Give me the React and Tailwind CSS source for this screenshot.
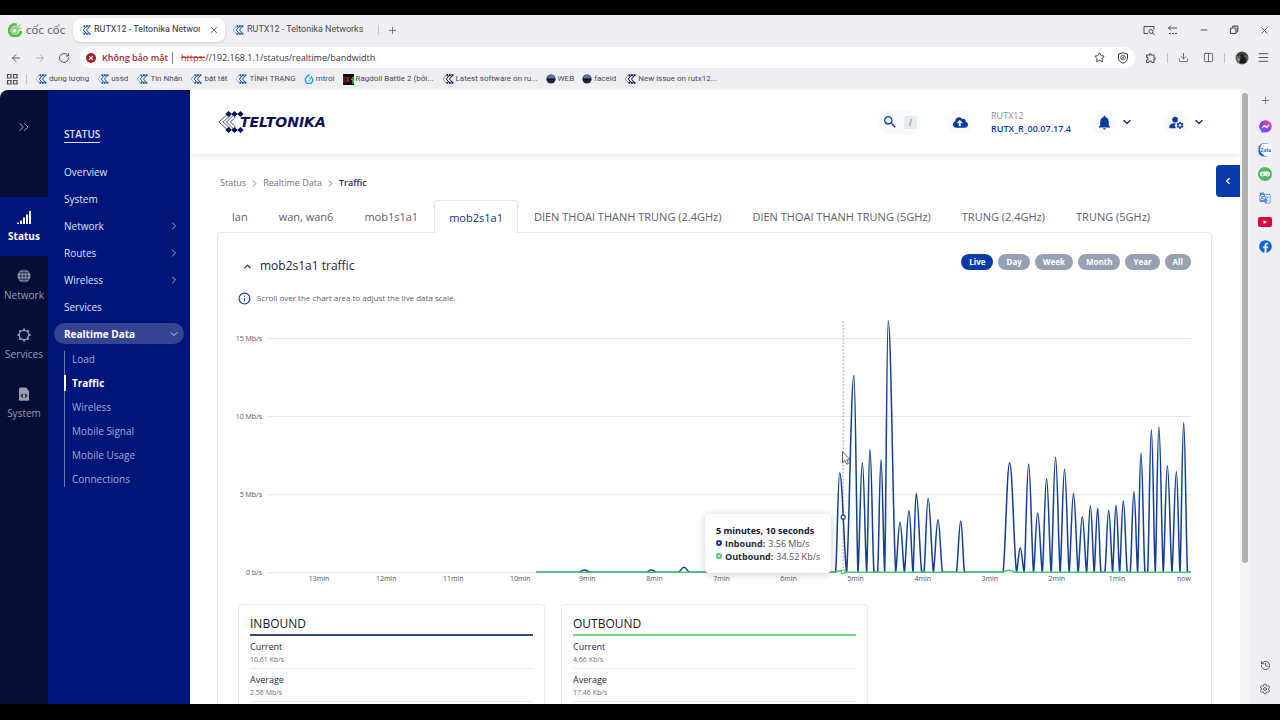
import { useState } from 'react'
import {
  ArrowLeft, ArrowRight, RotateCw, X, Plus, Star, Download, Columns2, Menu, Minus,
  ChevronRight, ChevronLeft, ChevronDown, ChevronUp, ChevronsRight, History, Settings, Info,
} from 'lucide-react'
import { FaFacebook, FaFacebookMessenger, FaCloudUploadAlt, FaGamepad } from 'react-icons/fa'
import { MdSearch, MdNotifications, MdManageAccounts, MdGTranslate, MdOutlineExtension } from 'react-icons/md'

const BOOKMARKS = [
  { label: 'dung lượng', icon: 'teltonika' },
  { label: 'ussd', icon: 'teltonika' },
  { label: 'Tin Nhắn', icon: 'teltonika' },
  { label: 'bật tắt', icon: 'teltonika' },
  { label: 'TÌNH TRẠNG', icon: 'teltonika' },
  { label: 'mtroi', icon: 'drop' },
  { label: 'Ragdoll Battle 2 (bởi...', icon: 'game' },
  { label: 'Latest software on ru...', icon: 'dark' },
  { label: 'WEB', icon: 'orb' },
  { label: 'faceid', icon: 'orb' },
  { label: 'New issue on rutx12...', icon: 'dark' },
]

const RAIL = ['Status', 'Network', 'Services', 'System']

const MENU = [
  { label: 'Overview' },
  { label: 'System' },
  { label: 'Network', nested: true },
  { label: 'Routes', nested: true },
  { label: 'Wireless', nested: true },
  { label: 'Services' },
]

const SUBMENU = ['Load', 'Traffic', 'Wireless', 'Mobile Signal', 'Mobile Usage', 'Connections']

const TABS = [
  'lan', 'wan, wan6', 'mob1s1a1', 'mob2s1a1',
  'DIEN THOAI THANH TRUNG (2.4GHz)', 'DIEN THOAI THANH TRUNG (5GHz)',
  'TRUNG (2.4GHz)', 'TRUNG (5GHz)',
]

const RANGES = ['Live', 'Day', 'Week', 'Month', 'Year', 'All']

const STATS = [
  { title: 'INBOUND', line: 'border-[#2c4a78]', rows: [['Current', '10.61 Kb/s'], ['Average', '2.56 Mb/s']] },
  { title: 'OUTBOUND', line: 'border-[#74d188]', rows: [['Current', '4.66 Kb/s'], ['Average', '17.46 Kb/s']] },
]

// chart geometry
const BASE = 257
const PX_PER_MB = 15.6

// [start, centre, end, Mb/s]
const PEAKS = [
  [597, 601, 608, 6.35], [608, 615.3, 619.3, 12.6], [619.3, 623.7, 628, 7.02], [628, 631.3, 635.3, 7.9],
  [639, 642.3, 646, 7.2], [646, 649.5, 657, 16.1], [657, 661.3, 665.7, 3.2], [665.7, 670.3, 674.3, 3.95],
  [674.3, 677.5, 683, 5.05], [685.3, 689.4, 694.7, 4.72], [694.7, 699.3, 703.7, 3.37], [717.7, 722, 725.7, 3.28],
  [764.3, 770.8, 777.7, 7.02], [777.7, 781.4, 785.3, 1.55], [785.3, 789.8, 794.7, 6.93], [794.7, 798.8, 803.5, 3.8],
  [803.5, 807.7, 812.3, 6], [812.3, 816.7, 821.3, 7.36], [821.3, 825.7, 830.3, 6.6], [830.3, 834.6, 839.3, 5.05],
  [839.3, 843.4, 847.7, 3.56], [847.7, 851.5, 855.3, 4.25], [855.3, 858.8, 862, 4.1], [866, 869.8, 873.7, 3.97],
  [873.7, 877.1, 880.7, 4.27], [880.7, 884.4, 888.3, 4.58], [891.3, 895, 898.7, 5.16], [898.7, 902, 906, 7.64],
  [908.7, 912.4, 916.3, 9.13], [916.3, 919.9, 924.3, 9.3], [924.3, 928.4, 933, 6.82], [933, 937.4, 941, 6.43],
  [941, 944.7, 948.5, 9.58],
]

const SMALL_PEAKS = [[341, 346, 352, 0.14], [408, 413, 418, 0.14], [440, 445.5, 451, 0.32]]

const X_TICKS = [
  [81, '13min'], [148, '12min'], [215, '11min'], [282, '10min'], [349, '9min'], [416, '8min'], [483, '7min'],
  [550, '6min'], [617, '5min'], [684, '4min'], [751, '3min'], [818, '2min'], [878, '1min'], [945, 'now'],
]

const Y_TICKS = [[0, '0 b/s'], [5, '5 Mb/s'], [10, '10 Mb/s'], [15, '15 Mb/s']]

function buildPath(peaks, from) {
  let d = `M${from} ${BASE}`
  peaks.forEach(([s, c, e, v]) => {
    const h = v * PX_PER_MB
    const top = BASE - h
    d += ` L${s} ${BASE} C${s + (c - s) * 0.35} ${BASE - h * 0.15} ${c - (c - s) * 0.4} ${top} ${c} ${top}`
    d += ` C${c + (e - c) * 0.4} ${top} ${e - (e - c) * 0.35} ${BASE - h * 0.15} ${e} ${BASE}`
  })
  return `${d} L952 ${BASE}`
}

function Mark({ dark }) {
  const c = dark ? '#11164f' : '#1d5a9c'
  return (
    <svg viewBox="0 0 12 10" className="h-2.5 w-3 shrink-0" fill="none" stroke={c}>
      <path d="M4.500 .8 1 5l3.500 4.200" strokeWidth=".7" opacity=".6" />
      <path d="M6.800 2 4.300 5l2.500 3M10 2 7.500 5 10 8" strokeWidth="1" />
      <path d="M4.500 1.300h7M4.500 8.700h7" strokeWidth="1.900" strokeDasharray="1.900 .6" />
    </svg>
  )
}

function BookmarkIcon({ type }) {
  if (type === 'drop') {
    return (
      <svg viewBox="0 0 12 12" className="size-2.5 shrink-0" fill="none">
        <path d="M6.500.8C4 2.500 1.500 4.500 1.500 7.200a4.500 4.500 0 0 0 9 0C10.500 5 9 4.500 8.500 3" stroke="#1f9fd0" strokeWidth="1.700" />
        <path d="M6 4.500c2.500 1 2 4-.5 4.500" stroke="#4cc3ea" strokeWidth="1.500" />
      </svg>
    )
  }
  if (type === 'game') {
    return (
      <svg viewBox="0 0 12 12" className="size-[11px] shrink-0">
        <rect width="12" height="12" fill="#150808" />
        <path d="M1 3v6M3 3l4 6M7 3 3 9" stroke="#c22222" strokeWidth="1.200" />
        <path d="M11 3v2M9 5.500l2 1v4" stroke="#35b43a" strokeWidth="2" fill="none" />
      </svg>
    )
  }
  if (type === 'orb') {
    return (
      <svg viewBox="0 0 12 12" className="size-2.5 shrink-0">
        <circle cx="6" cy="6" r="5.500" fill="#1b2440" />
        <path d="M1.500 5.500a4.500 4.500 0 0 1 9 0Z" fill="#5c7396" />
        <path d="M1 6.500h10" stroke="#0c1226" strokeWidth="1.500" />
      </svg>
    )
  }
  return <Mark dark={type === 'dark'} />
}

function RailIcon({ name }) {
  if (name === 'Status') {
    return (
      <svg viewBox="0 0 14 14" className="size-3.5" fill="currentColor">
        <path d="M0 12.500h2V14H0zM3 10.500h2V14H3zM6 7.500h2V14H6zM9 4.500h2V14H9zM12 1h2v13h-2z" />
      </svg>
    )
  }
  if (name === 'Network') {
    return (
      <svg viewBox="0 0 14 14" className="size-3.5">
        <circle cx="7" cy="7" r="6.500" fill="currentColor" />
        <g fill="none" stroke="#040e37" strokeWidth=".7">
          <ellipse cx="7" cy="7" rx="3.200" ry="6.500" />
          <path d="M7 .5v13M.5 7h13M1.500 3.800h11M1.500 10.200h11" />
        </g>
      </svg>
    )
  }
  if (name === 'Services') {
    return (
      <svg viewBox="0 0 14 14" className="size-3.5" fill="none" stroke="currentColor">
        <circle cx="7" cy="7" r="4.700" strokeWidth="1.200" />
        <path d="M7 .5v2M7 11.500v2M.5 7h2M11.500 7h2M2.400 2.400l1.400 1.400M10.200 10.200l1.400 1.400M2.400 11.600l1.400-1.400M10.200 3.800l1.400-1.400" strokeWidth="2" />
      </svg>
    )
  }
  return (
    <svg viewBox="0 0 14 14" className="size-3.5">
      <path d="M3.500.5H9L12 4v8.500a1.200 1.200 0 0 1-1.200 1.200H3.200A1.200 1.200 0 0 1 2 12.500V2A1.500 1.500 0 0 1 3.500.5Z" fill="currentColor" />
      <path d="M6 7 4.200 8.800 6 10.600M8 7l1.800 1.800L8 10.600" fill="none" stroke="#040e37" strokeWidth="1.100" />
    </svg>
  )
}

function BrowserChrome() {
  return (
    <header className="shrink-0 text-[#4a4a50]">
      {/* Tab strip */}
      <div className="flex h-8 items-center pb-0.5 pl-2 font-['Roboto','Noto_Sans',sans-serif]">
        <div className="flex w-[65px] items-center gap-1">
          <svg viewBox="0 0 14 14" className="size-3.5 shrink-0">
            <path d="M8 1.500a6 6 0 1 0 5 6.500" fill="none" stroke="#55b948" strokeWidth="2.600" />
            <circle cx="6.500" cy="8" r="4" fill="#8fd480" />
            <circle cx="6.500" cy="7.800" r="1.800" fill="#efeff3" />
            <path d="M8 4.500 8.500.5M9.500 5 12 1.500M10 6.500l3.500-1.500" stroke="#6cc15c" strokeWidth="1.200" />
          </svg>
          <span className="font-['Lato',sans-serif] text-xs leading-4 whitespace-nowrap text-[#66666c]">cốc cốc</span>
        </div>
        <div className="flex h-6 w-[152px] items-center gap-[3px] rounded-lg bg-white px-1.5 shadow-sm">
          <Mark />
          <button className="w-[106px] overflow-hidden text-left whitespace-nowrap text-[#333338]">RUTX12 - Teltonika Networks</button>
          <button aria-label="Close tab" className="ml-auto"><X size={10} strokeWidth={2} /></button>
        </div>
        <button className="ml-[7px] flex w-[146px] items-center gap-[3px] whitespace-nowrap">
          <Mark />
          RUTX12 - Teltonika Networks
        </button>
        <span className="h-2.5 w-px bg-[#c3c3c8]" />
        <button aria-label="New tab" className="ml-2"><Plus size={11} strokeWidth={1.500} /></button>
        <div className="ml-auto flex items-center pr-2.5">
          <button aria-label="Search tabs" className="mr-3">
            <svg viewBox="0 0 12 12" className="size-3" fill="none" stroke="currentColor">
              <path d="M5 9.500H1v-7h10v3" />
              <circle cx="8" cy="7.500" r="2" />
              <path d="m9.500 9 2 2" />
            </svg>
          </button>
          <button aria-label="Reopen tab" className="mr-5">
            <svg viewBox="0 0 12 12" className="size-3" fill="none" stroke="currentColor">
              <path d="M4 1.500 1.500 4 4 6.500M1.500 4H10" />
              <path d="M2 9.500h9" strokeDasharray="2 1" />
            </svg>
          </button>
          <button aria-label="Minimize" className="mr-5"><Minus size={10} strokeWidth={2.500} /></button>
          <button aria-label="Restore" className="mr-5">
            <svg viewBox="0 0 10 10" className="size-2.5" fill="none" stroke="currentColor" strokeWidth="1.200">
              <rect x="1.500" y="3" width="5.500" height="5.500" rx="1" />
              <path d="M3.500 2.500V2a.8.8 0 0 1 .8-.8H8a.8.8 0 0 1 .8.800v4a.8.8 0 0 1-.8.800H7.500" />
            </svg>
          </button>
          <button aria-label="Close"><X size={11} strokeWidth={2} /></button>
        </div>
      </div>

      {/* Address bar */}
      <div className="flex h-[21px] items-center pr-2.5 pl-2.5">
        <button aria-label="Back" className="mr-3"><ArrowLeft size={12} strokeWidth={1.800} /></button>
        <button aria-label="Forward" className="mr-3 text-[#a4a4aa]"><ArrowRight size={12} strokeWidth={1.800} /></button>
        <button aria-label="Reload" className="mr-2.5"><RotateCw size={12} strokeWidth={1.800} /></button>
        <div className="flex h-full flex-1 items-center rounded-full bg-white px-1.5 text-[#333338]">
          <svg viewBox="0 0 10 10" className="size-2.5 shrink-0">
            <circle cx="5" cy="5" r="5" fill="#a81e26" />
            <path d="m3.200 3.200 3.600 3.600M6.800 3.200 3.200 6.800" stroke="#fff" strokeWidth="1.200" />
          </svg>
          <span className="ml-1.5 font-semibold whitespace-nowrap text-[#a81e26]">Không bảo mật</span>
          <span className="mr-2 ml-1 h-3 w-px bg-[#85858a]" />
          <span className="text-[#c0392f] line-through">https:</span>
          <input aria-label="Address" defaultValue="//192.168.1.1/status/realtime/bandwidth" className="min-w-0 flex-1 bg-transparent outline-none" />
          <button aria-label="Bookmark" className="mr-3"><Star size={11} strokeWidth={2} /></button>
          <button aria-label="Ad block">
            <svg viewBox="0 0 12 12" className="size-3" fill="none" stroke="currentColor">
              <path d="M6 .8 10.500 2v4c0 2.500-1.800 4.200-4.500 5.200C3.300 10.200 1.500 8.500 1.500 6V2Z" />
              <circle cx="6" cy="5.500" r="2.400" strokeWidth=".7" />
              <path d="M4.500 7 7.500 4M5 4.500l1.500 2" strokeWidth=".8" />
            </svg>
          </button>
        </div>
        <button aria-label="Extensions" className="ml-2.5"><MdOutlineExtension size={12} /></button>
        <span className="mx-2.5 h-2.5 w-px bg-[#c3c3c8]" />
        <button aria-label="Downloads"><Download size={11} strokeWidth={1.800} /></button>
        <button aria-label="Split view" className="ml-3.5"><Columns2 size={11} strokeWidth={1.800} /></button>
        <span className="mx-2.5 h-2.5 w-px bg-[#c3c3c8]" />
        <button aria-label="Profile">
          <svg viewBox="0 0 14 14" className="size-3.5">
            <circle cx="7" cy="7" r="6.500" fill="#5e6350" />
            <path d="M1 5a6.500 6.500 0 0 1 12 0L9 4 6 5Z" fill="#3d4238" />
            <path d="M5 4l3-1 1.500 3 2 2-1 4-5 .500L4 10l2-3Z" fill="#1d1c24" />
            <path d="M2 7l3 1-1 3Z" fill="#a99fa6" />
          </svg>
        </button>
        <button aria-label="Menu" className="ml-2"><Menu size={13} strokeWidth={1.800} /></button>
      </div>

      {/* Bookmarks */}
      <nav className="flex h-[22px] items-center gap-2 pl-1.5 font-['Roboto','Noto_Sans',sans-serif] text-[8px]">
        <button aria-label="Apps">
          <svg viewBox="0 0 12 12" className="size-3" fill="none" stroke="currentColor" strokeWidth="1.200">
            <path d="M1.500 1.500h3.500V5H1.500zM7.500 1.500H11V5H7.500zM1.500 7.500H5V11H1.500zM7.500 7.500H11V11H7.500z" />
          </svg>
        </button>
        <span className="h-2.5 w-px bg-[#c3c3c8]" />
        {BOOKMARKS.map((b) => (
          <a key={b.label} href="#" className="flex items-center gap-0.5 whitespace-nowrap">
            <BookmarkIcon type={b.icon} />
            {b.label}
          </a>
        ))}
      </nav>
    </header>
  )
}

function Rail() {
  return (
    <nav className="flex w-12 shrink-0 flex-col bg-[#040e37] text-[#9a9fb5]">
      <button aria-label="Expand menu" className="mt-[29px] mb-[62px] flex justify-center"><ChevronsRight size={16} strokeWidth={1.500} /></button>
      {RAIL.map((name) => (
        <a
          key={name}
          href="#"
          className={`flex h-[59px] flex-col items-center justify-center gap-1 text-[10px] leading-4 ${name === 'Status' ? 'bg-[#001577] font-bold text-white' : ''}`}
        >
          <RailIcon name={name} />
          {name}
        </a>
      ))}
    </nav>
  )
}

function Sidebar() {
  return (
    <nav className="w-[142px] shrink-0 bg-[#001577] px-1.5 text-[10px] leading-4 font-medium text-[#dfe3f5]">
      <h2 className="mt-9 ml-2.5 w-fit border-b border-[#dfe3f5] font-semibold">STATUS</h2>
      <ul className="mt-[18px] flex flex-col gap-1.5">
        {MENU.map((m) => (
          <li key={m.label}>
            <a href="#" className="flex h-[21px] items-center justify-between pr-1 pl-2.5">
              {m.label}
              {m.nested && <ChevronRight size={12} strokeWidth={1.500} />}
            </a>
          </li>
        ))}
        <li>
          <a href="#" className="flex h-[21px] items-center justify-between rounded-full bg-[#354490] pr-1 pl-2.5 font-bold text-white">
            Realtime Data
            <ChevronDown size={12} strokeWidth={1.500} />
          </a>
          <ul className="mt-[7px] ml-2.5 flex flex-col gap-2 border-l border-[#6f7ab5] text-[#9fa9d8]">
            {SUBMENU.map((s) => (
              <li key={s} className={s === 'Traffic' ? '-ml-px border-l-2 border-white font-bold text-white' : ''}>
                <a href="#" className={s === 'Traffic' ? 'block pl-1.5' : 'block pl-[7px]'}>{s}</a>
              </li>
            ))}
          </ul>
        </li>
      </ul>
    </nav>
  )
}

function Logo() {
  return (
    <a href="#" aria-label="Teltonika" className="flex items-center text-[#070f5c]">
      <svg viewBox="0 0 26 22" className="h-[22px] w-[26px] shrink-0" fill="none" stroke="currentColor">
        <path d="M10.500 2.500 .8 11l9.700 8.500M12.500 4.500 5 11l7.500 6.500" strokeWidth=".7" />
        <path d="M16.500 3 8.500 11l8 8M18 5.500 12.500 11l5.500 5.500" strokeWidth=".7" />
        <g fill="currentColor" stroke="none">
          <path d="m10.500 0 3.200 3-3.200 3-3.200-3zM16.500 0l3.200 3-3.200 3-3.200-3zM22.500 0l3.200 3-3.200 3-3.200-3z" />
          <path d="m10.500 16 3.200 3-3.200 3-3.200-3zM16.500 16l3.200 3-3.200 3-3.200-3zM22.500 16l3.200 3-3.200 3-3.200-3z" />
        </g>
      </svg>
      <span className="-ml-1 font-['DejaVu_Sans',sans-serif] text-sm leading-4 font-bold italic">TELTONIKA</span>
    </a>
  )
}

function TopBar() {
  return (
    <div className="relative flex h-16 shrink-0 items-center bg-white pr-[35px] pl-7 text-[#0a3aa0] shadow-[0_1px_8px_rgba(0,0,0,0.1)]">
      <Logo />
      <button aria-label="Search" className="ml-auto flex h-[26px] items-center gap-1.5 rounded-full bg-[#f8fafb] px-1">
        <MdSearch size={16} />
        <kbd className="rounded-xs bg-[#e8ebee] px-[5px] font-sans text-[8px] leading-[13px] text-[#6b7280]">/</kbd>
      </button>
      <button aria-label="Upload" className="ml-[26px] flex size-[26px] items-center justify-center rounded-full bg-[#f8fafb]"><FaCloudUploadAlt size={15} /></button>
      <div className="ml-[18px] text-[9px] leading-[13px]">
        <p className="text-[#8b8e96]">RUTX12</p>
        <p className="font-semibold">RUTX_R_00.07.17.4</p>
      </div>
      <button aria-label="Notifications" className="ml-5 flex items-center gap-1">
        <span className="flex size-[26px] items-center justify-center rounded-full bg-[#f8fafb]"><MdNotifications size={17} /></span>
        <ChevronDown size={12} strokeWidth={3} />
      </button>
      <button aria-label="Account" className="ml-[30px] flex items-center gap-1">
        <span className="flex size-[26px] items-center justify-center rounded-full bg-[#f8fafb]"><MdManageAccounts size={17} /></span>
        <ChevronDown size={12} strokeWidth={3} />
      </button>
    </div>
  )
}

function TrafficChart() {
  return (
    <div className="relative mt-[9px]">
      <svg viewBox="0 0 952 272" className="block w-full overflow-visible" fontSize="7" fill="#4b5563">
        {Y_TICKS.map(([v, label]) => (
          <g key={label}>
            <path d={`M29 ${BASE + 0.5 - v * PX_PER_MB}H952`} stroke="#e6e8eb" />
            <text x="24" y={BASE + 3 - v * PX_PER_MB} textAnchor="end">{label}</text>
          </g>
        ))}
        {X_TICKS.map(([x, label]) => (
          <text key={label} x={x} y="266" textAnchor="middle">{label}</text>
        ))}
        <path d="M604.500 6V257" stroke="#8a9099" strokeDasharray="2 1.500" strokeWidth=".8" />
        <path d={buildPath([...SMALL_PEAKS, ...PEAKS], 298)} fill="none" stroke="#123f93" strokeWidth="1.500" strokeLinejoin="round" />
        <path d="M298 257H595q7-2 10-1t8 1H764q6-4 12 0H952" fill="none" stroke="#4cc472" strokeWidth="1.500" />
        <circle cx="604.500" cy="202" r="2" fill="#fff" stroke="#123f93" strokeWidth="1.200" />
        <circle cx="604.500" cy="256.500" r="2" fill="#fff" stroke="#4cc472" strokeWidth="1.200" />
      </svg>
      <div className="absolute top-[73%] left-[49%] rounded-sm bg-white px-[11px] py-2.5 text-[9px] leading-[13px] whitespace-nowrap text-[#4b5563] shadow-[0_1px_8px_rgba(0,0,0,0.2)]">
        <p className="font-bold text-[#111827]">5 minutes, 10 seconds</p>
        <p className="flex items-center gap-[3px]">
          <span className="size-1.5 rounded-full border-2 border-[#123f93]" />
          <b className="text-[#1f2937]">Inbound:</b> 3.56 Mb/s
        </p>
        <p className="flex items-center gap-[3px]">
          <span className="size-1.5 rounded-full border-2 border-[#4cc472]" />
          <b className="text-[#1f2937]">Outbound:</b> 34.52 Kb/s
        </p>
      </div>
      <svg viewBox="0 0 9 14" className="absolute top-[50%] left-[63.4%] h-3.5 w-[9px]">
        <path d="M.5.8v11l2.500-2.300 1.600 3.700 1.900-.800-1.600-3.600h3.400Z" fill="#fff" stroke="#333" strokeWidth=".8" />
      </svg>
    </div>
  )
}

function StatCard({ stat }) {
  return (
    <section className="rounded-sm border border-[#e8eaee] px-[11px] pt-2.5 pb-10">
      <h3 className={`border-b-2 pb-0.5 text-xs leading-[17px] font-medium text-[#111827] ${stat.line}`}>{stat.title}</h3>
      <dl>
        {stat.rows.map(([k, v]) => (
          <div key={k} className="border-b border-[#e8eaee] pt-1 pb-0.5 leading-[13px]">
            <dt className="text-[9px] text-[#1f2937]">{k}</dt>
            <dd className="text-[7px] text-[#6b7280]">{v}</dd>
          </div>
        ))}
      </dl>
    </section>
  )
}

function SidePanel() {
  return (
    <aside className="flex w-[30px] shrink-0 flex-col items-center pt-[3px] pb-[9px] text-[#4a4a50]">
      <button aria-label="Add" className="flex h-3.5 items-center"><Plus size={11} strokeWidth={1.500} /></button>
      <div className="mt-3 flex flex-col items-center gap-2.5">
        <button aria-label="Messenger" className="flex size-3.5 items-center justify-center">
          <svg width="0" height="0" className="absolute">
            <linearGradient id="msg" x1="0" y1="1" x2="1" y2="0">
              <stop offset="0" stopColor="#2b6bff" />
              <stop offset=".5" stopColor="#9a3ae6" />
              <stop offset="1" stopColor="#ff5a70" />
            </linearGradient>
          </svg>
          <FaFacebookMessenger size={13} fill="url(#msg)" />
        </button>
        <button aria-label="Zalo" className="flex size-3.5 items-center justify-center">
          <svg viewBox="0 0 14 14" className="size-3.5">
            <rect x=".5" y=".5" width="13" height="13" rx="5" fill="#1565c8" />
            <path d="M4 1h8a3 3 0 0 1 2 3v7q-2 3-7 2Q2 10 2 6q0-3 2-5Z" fill="#fff" />
            <text x="2.500" y="8.500" fontSize="5" fontWeight="700" fill="#1f6fd0">Zalo</text>
          </svg>
        </button>
        <button aria-label="Games" className="flex size-3.5 items-center justify-center rounded-full bg-[#50b568] text-white"><FaGamepad size={10} /></button>
        <button aria-label="Translate" className="flex size-3.5 items-center justify-center text-[#5a88d0]"><MdGTranslate size={12} /></button>
        <button aria-label="YouTube" className="flex size-3.5 items-center justify-center">
          <svg viewBox="0 0 14 10" className="h-2.5 w-3.5">
            <rect width="14" height="10" rx="2" fill="#d8063c" />
            <path d="M5.500 3v4L9 5Z" fill="#fff" />
          </svg>
        </button>
        <button aria-label="Facebook" className="flex size-3.5 items-center justify-center text-[#1263d4]"><FaFacebook size={13} /></button>
      </div>
      <button aria-label="History" className="mt-auto"><History size={11} /></button>
      <button aria-label="Settings" className="mt-3"><Settings size={12} strokeWidth={1.800} /></button>
    </aside>
  )
}

export default function App() {
  const [tab, setTab] = useState('mob2s1a1')
  const [range, setRange] = useState('Live')

  return (
    <div className="h-screen overflow-hidden bg-black pt-[15px] pb-4 font-['Open_Sans','Noto_Sans',sans-serif]">
      <div className="flex h-full flex-col bg-[#efeff3] text-[9px]">
        <BrowserChrome />
        <div className="flex min-h-0 flex-1">
          <div className="flex min-w-0 flex-1 overflow-hidden rounded-t-lg bg-white">
            <Rail />
            <Sidebar />
            <main className="flex min-w-0 flex-1 flex-col overflow-hidden">
              <TopBar />
              <div className="relative min-h-0 flex-1 overflow-hidden pt-[21px] pr-7 pl-[27px]">
                <button aria-label="Open panel" className="absolute top-[11px] right-0 flex h-8 w-6 items-center justify-center rounded-l bg-[#083aa9] text-white">
                  <ChevronLeft size={10} strokeWidth={3} />
                </button>
                <nav className="flex items-center gap-[3px] pl-[3px] text-[9px] leading-4 text-[#6b7280]">
                  <a href="#">Status</a>
                  <ChevronRight size={11} strokeWidth={2} />
                  <a href="#">Realtime Data</a>
                  <ChevronRight size={11} strokeWidth={2} />
                  <a href="#" className="font-semibold text-[#1e2a4a]">Traffic</a>
                </nav>

                {/* Interface tabs */}
                <div role="tablist" className="mt-[9px] flex gap-px text-[11px] leading-4">
                  {TABS.map((t) => (
                    <button
                      key={t}
                      role="tab"
                      aria-selected={t === tab}
                      onClick={() => setTab(t)}
                      className={`pt-0.5 whitespace-nowrap ${t === tab ? 'relative -mb-px h-[33px] rounded-t-sm border border-b-0 border-[#e5e7eb] bg-white px-3.5 font-medium text-[#0a3584]' : 'h-8 px-[15px] text-[#5b616c]'}`}
                    >
                      {t}
                    </button>
                  ))}
                </div>

                <section className="rounded-sm border border-[#e5e7eb] px-5 pt-[21px] pb-10">
                  <div className="flex items-start justify-between">
                    <h1>
                      <button className="flex items-center gap-[7px] pl-1 text-xs leading-6 font-medium text-[#1f2430]">
                        <ChevronUp size={11} strokeWidth={2.500} />
                        {tab} traffic
                      </button>
                    </h1>
                    <div className="flex gap-[5px]">
                      {RANGES.map((r) => (
                        <button
                          key={r}
                          onClick={() => setRange(r)}
                          className={`h-4 rounded-full px-2 text-[8px] leading-4 font-bold text-white ${r === range ? 'bg-[#083aa9]' : 'bg-[#97a1b3]'}`}
                        >
                          {r}
                        </button>
                      ))}
                    </div>
                  </div>
                  <p className="mt-3 flex items-center gap-1.5 text-[8px] leading-4 text-[#5b616c]">
                    <Info size={13} strokeWidth={2} color="#0a3584" />
                    Scroll over the chart area to adjust the live data scale.
                  </p>
                  <TrafficChart />
                  <div className="mt-[17px] grid grid-cols-3 gap-4">
                    {STATS.map((s) => <StatCard key={s.title} stat={s} />)}
                  </div>
                </section>
              </div>
            </main>
            <div className="w-[10px] shrink-0 bg-[#f4f4f5] px-0.5 pt-[3px]">
              <div className="h-[77%] rounded-full bg-[#b0b0b2]" />
            </div>
          </div>
          <SidePanel />
        </div>
      </div>
    </div>
  )
}
